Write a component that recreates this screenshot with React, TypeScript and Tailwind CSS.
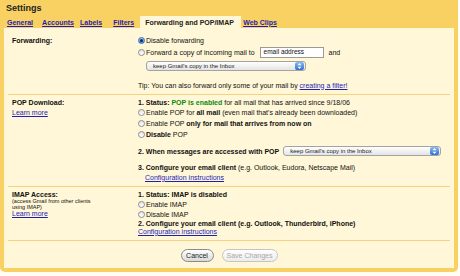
import React from "react";

const Radio = ({ checked }: { checked?: boolean }) =>
  checked ? (
    <span className="inline-flex items-center justify-center w-[7px] h-[7px] rounded-full border border-[#3d6fb5] bg-linear-to-b from-[#a9d0f7] to-[#3a82dc] shrink-0">
      <span className="w-[3px] h-[3px] rounded-full bg-[#0f2c55]" />
    </span>
  ) : (
    <span className="inline-block w-[7px] h-[7px] rounded-full border border-[#8e8e8e] bg-linear-to-b from-[#e4e4e4] to-white shrink-0" />
  );

const Select = ({ w }: { w: string }) => (
  <div
    className={`flex items-center h-[10px] ${w} rounded-[3px] border border-[#a3a3a3] bg-linear-to-b from-white to-[#e4e4e4] pl-[6px] pr-px`}
  >
    <span className="flex-1 text-[6px] leading-none text-[#222]">keep Gmail's copy in the Inbox</span>
    <span className="flex items-center justify-center w-[9px] h-[8px] rounded-[2px] bg-linear-to-b from-[#8cbdf2] to-[#2d6dcf]">
      <svg width="5" height="6" viewBox="0 0 5 6">
        <path d="M2.5 0 L4.5 2.3 L0.5 2.3 Z" fill="#fff" />
        <path d="M2.5 6 L4.5 3.7 L0.5 3.7 Z" fill="#fff" />
      </svg>
    </span>
  </div>
);

const Link = ({ children }: { children: React.ReactNode }) => (
  <span className="text-[#1d1db8] underline">{children}</span>
);

const Divider = () => <div className="mx-[4px] h-px bg-[#f3d47c]" />;

export default function App() {
  return (
    <div className="w-[460px] h-[276px] bg-[#fffdf4] font-[Liberation_Sans,Arial,sans-serif] text-[#111]">
      <div className="w-[458px] h-[272px] bg-[#f9d163] rounded-b-[5px] flex flex-col px-[4px] pb-[4px]">
        {/* Title */}
        <div className="h-[16px] flex items-center pl-[2px]">
          <span className="text-[9px] font-bold leading-none text-[#222]">Settings</span>
        </div>
        {/* Tabs */}
        <div className="h-[12px] flex items-stretch text-[7px] font-bold leading-none">
          <span className="ml-[3px] flex items-center text-[#1d1db8] underline">General</span>
          <span className="ml-[9px] flex items-center text-[#1d1db8] underline">Accounts</span>
          <span className="ml-[6px] flex items-center text-[#1d1db8] underline">Labels</span>
          <span className="ml-[11px] flex items-center text-[#1d1db8] underline">Filters</span>
          <span className="ml-[6px] w-[101px] pl-[5px] flex items-center bg-[#fff7d7] text-[#222]">
            Forwarding and POP/IMAP
          </span>
          <span className="ml-[2px] flex items-center text-[#1d1db8] underline">Web Clips</span>
        </div>
        {/* Panel */}
        <div className="flex-1 bg-[#fff7d7] flex flex-col text-[7px] leading-none">
          {/* Forwarding */}
          <div className="flex pl-[8px] pt-[7px] pb-[4px]">
            <div className="w-[126px]">
              <div className="h-[11px] flex items-center font-bold">Forwarding:</div>
            </div>
            <div className="flex-1 flex flex-col">
              <div className="h-[11px] flex items-center">
                <Radio checked />
                <span className="ml-px">Disable forwarding</span>
              </div>
              <div className="h-[12px] flex items-center">
                <Radio />
                <span className="ml-px">Forward a copy of incoming mail to</span>
                <span className="ml-[5px] w-[64px] h-[11px] flex items-center pl-[3px] bg-white border border-[#9a9a9a] text-[6.5px]">
                  email address
                </span>
                <span className="ml-[5px]">and</span>
              </div>
              <div className="mt-[3px] pl-[8px]">
                <Select w="w-[160px]" />
              </div>
              <div className="mt-[9px] h-[10px] flex items-center">
                <span>
                  Tip: You can also forward only some of your mail by <Link>creating a filter!</Link>
                </span>
              </div>
            </div>
          </div>
          <Divider />
          {/* POP */}
          <div className="flex pl-[8px] pt-[2px] pb-[4px]">
            <div className="w-[126px]">
              <div className="h-[10px] flex items-center font-bold">POP Download:</div>
              <div className="h-[10px] flex items-center">
                <Link>Learn more</Link>
              </div>
            </div>
            <div className="flex-1 flex flex-col">
              <div className="h-[10px] flex items-center">
                <span>
                  <b>1. Status: </b>
                  <b className="text-[#0d8a0d]">POP is enabled</b> for all mail that has arrived since 9/18/06
                </span>
              </div>
              <div className="h-[11px] flex items-center">
                <Radio />
                <span className="ml-px">
                  Enable POP for <b>all mail</b> (even mail that's already been downloaded)
                </span>
              </div>
              <div className="h-[11px] flex items-center">
                <Radio />
                <span className="ml-px">
                  Enable POP <b>only for mail that arrives from now on</b>
                </span>
              </div>
              <div className="h-[11px] flex items-center">
                <Radio />
                <span className="ml-px">
                  <b>Disable</b> POP
                </span>
              </div>
              <div className="mt-[5px] h-[12px] flex items-center">
                <b>2. When messages are accessed with POP</b>
                <span className="ml-[4px]">
                  <Select w="w-[158px]" />
                </span>
              </div>
              <div className="mt-[5px] h-[10px] flex items-center">
                <span>
                  <b>3. Configure your email client</b> (e.g. Outlook, Eudora, Netscape Mail)
                </span>
              </div>
              <div className="h-[10px] flex items-center pl-[7px]">
                <Link>Configuration instructions</Link>
              </div>
            </div>
          </div>
          <Divider />
          {/* IMAP */}
          <div className="flex pl-[8px] pt-[2px] pb-[5px]">
            <div className="w-[126px]">
              <div className="h-[10px] flex items-center font-bold">IMAP Access:</div>
              <div className="h-[5.5px] flex items-center text-[5.5px]">(access Gmail from other clients</div>
              <div className="h-[5.5px] flex items-center text-[5.5px]">using IMAP)</div>
              <div className="h-[7px] flex items-center">
                <Link>Learn more</Link>
              </div>
            </div>
            <div className="flex-1 flex flex-col">
              <div className="h-[10px] flex items-center font-bold">1. Status: IMAP is disabled</div>
              <div className="h-[10px] flex items-center">
                <Radio />
                <span className="ml-px">Enable IMAP</span>
              </div>
              <div className="h-[10px] flex items-center">
                <Radio />
                <span className="ml-px">Disable IMAP</span>
              </div>
              <div className="h-[8px] flex items-center font-bold">
                2. Configure your email client (e.g. Outlook, Thunderbird, iPhone)
              </div>
              <div className="h-[8px] flex items-center">
                <Link>Configuration instructions</Link>
              </div>
            </div>
          </div>
          <Divider />
          {/* Footer */}
          <div className="flex-1 flex justify-center items-start pt-[8px] gap-[8px]">
            <span className="w-[33px] h-[13px] rounded-full border border-[#8a8a8a] bg-linear-to-b from-white to-[#dadada] flex items-center justify-center text-[7px] text-[#222]">
              Cancel
            </span>
            <span className="w-[56px] h-[13px] rounded-full border border-[#c4c4c4] bg-linear-to-b from-white to-[#ececec] flex items-center justify-center text-[7px] text-[#a8a8a8]">
              Save Changes
            </span>
          </div>
        </div>
      </div>
    </div>
  );
}
